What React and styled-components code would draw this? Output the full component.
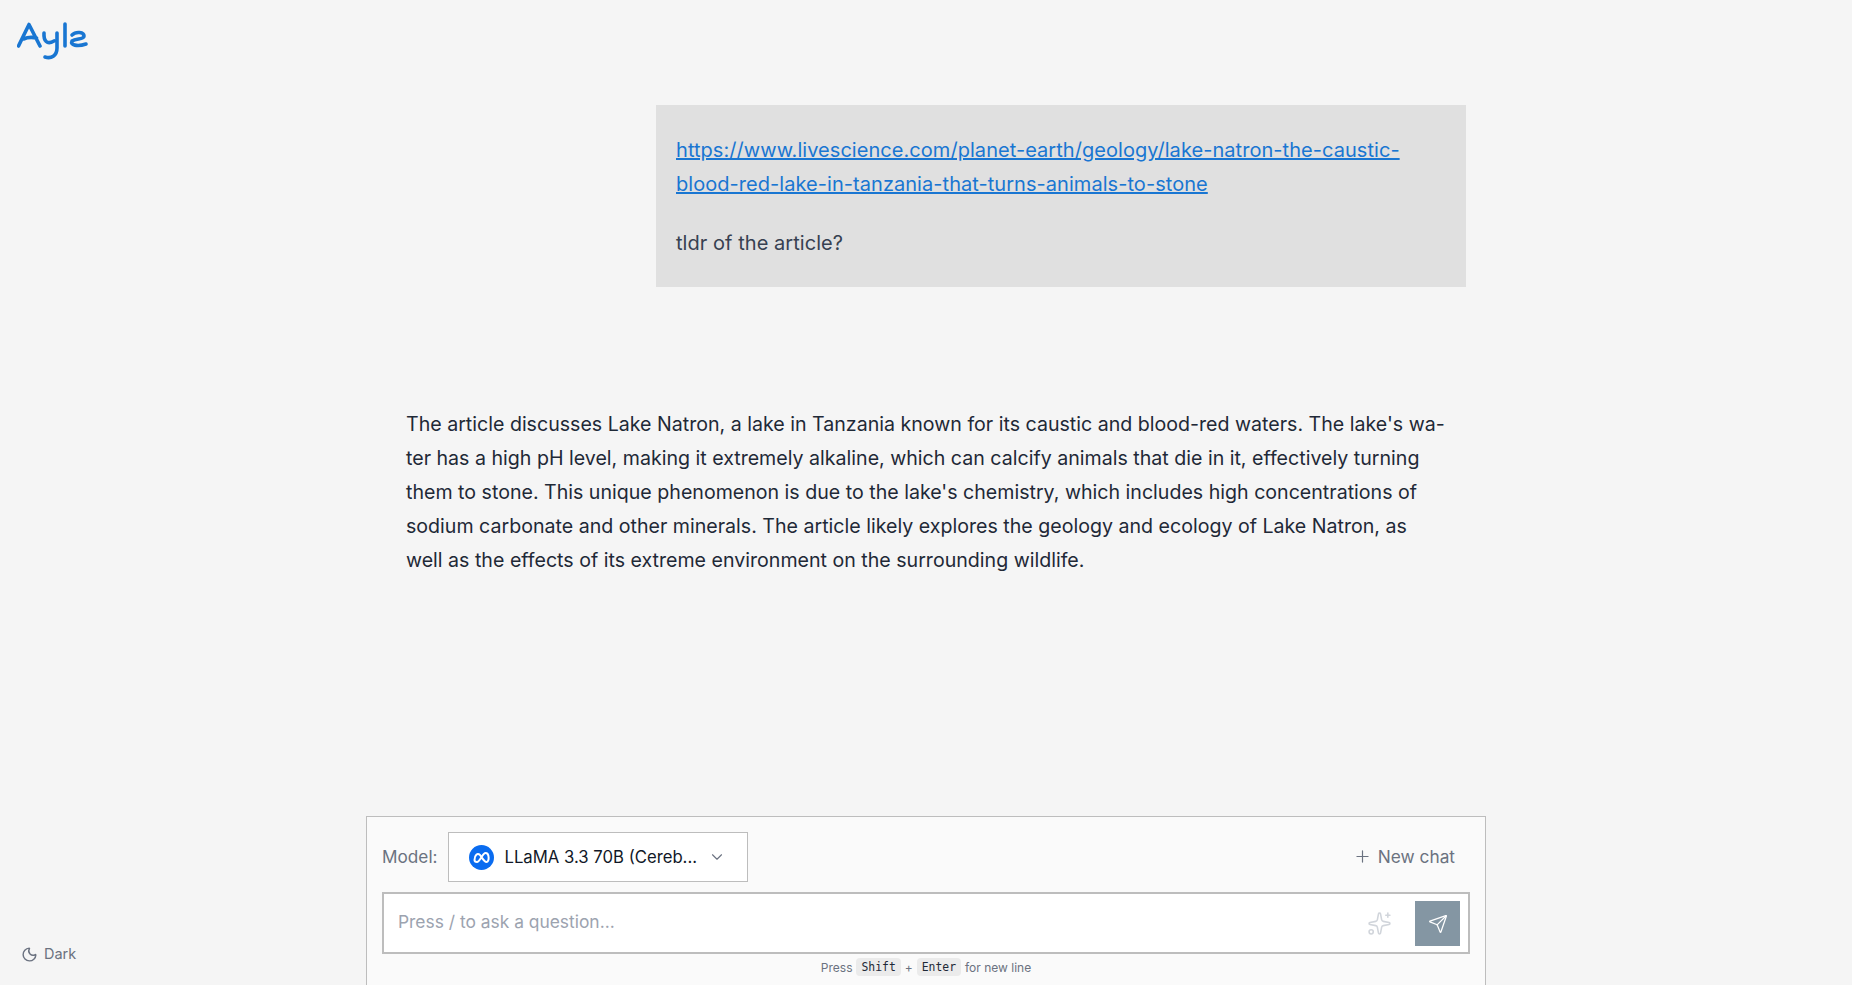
import React from 'react'
import styled, { createGlobalStyle } from 'styled-components'
import { ChevronDown, Moon, Plus, Send, Sparkles } from 'lucide-react'

const GlobalStyle = createGlobalStyle`
  html, body {
    margin: 0;
    height: 100%;
    background: #f5f5f5;
  }

  body {
    font-family: Inter, "Noto Sans", sans-serif;
    color: #1f2937;
  }
`

const Page = styled.div`
  display: grid;
  grid-template-columns: 366px 1120px 366px;
  height: 100vh;
  overflow: hidden;
`

const Sidebar = styled.aside`
  display: flex;
  flex-direction: column;
  justify-content: space-between;
  align-items: flex-start;
  padding: 21px 0 21px 17px;
`

const Theme = styled.button`
  display: flex;
  align-items: center;
  gap: 6px;
  padding: 0 0 0 4px;
  border: 0;
  background: none;
  color: #6b7280;
  font: 14.5px/20px Inter, sans-serif;
`

const Main = styled.main`
  display: flex;
  flex-direction: column;
  min-height: 0;
`

const Thread = styled.div`
  flex: 1;
  display: flex;
  flex-direction: column;
  width: 1080px;
  margin: 0 auto;
  padding-top: 105px;
`

const UserBubble = styled.div`
  align-self: flex-end;
  box-sizing: border-box;
  width: 810px;
  height: 182px;
  padding: 28px 20px 0;
  background: #e0e0e0;
  color: #374151;
  font-size: 20px;
  letter-spacing: 0.05px;
  line-height: 34px;
`

const BubbleParagraph = styled.p`
  margin: 0 0 ${p => p.$gap || 0}px;
`

const Link = styled.a`
  color: #1976d2;
  text-decoration: underline;
`

const Answer = styled.p`
  margin: 120px 0 0;
  padding: 0 20px;
  color: #1f2937;
  font-size: 19.6px;
  line-height: 34px;
`

const Composer = styled.section`
  box-sizing: border-box;
  height: 169px;
  padding: 15px 15px 0;
  background: #fafafa;
  border: 1px solid #bdbdbd;
  border-bottom: 0;
`

const ModelRow = styled.div`
  display: flex;
  align-items: center;
  height: 50px;
`

const ModelLabel = styled.span`
  margin-right: 10px;
  padding-bottom: 1px;
  color: #6b7280;
  font-size: 17.2px;
`

const ModelSelect = styled.button`
  display: flex;
  align-items: center;
  box-sizing: border-box;
  width: 300px;
  height: 50px;
  padding: 0 21px 0 20px;
  background: #fff;
  border: 1px solid #bdbdbd;
  color: #111827;
  font: 16.7px Inter, sans-serif;
`

const ModelName = styled.span`
  flex: 1;
  margin-left: 11px;
  text-align: left;
  white-space: nowrap;
`

const NewChat = styled.button`
  display: flex;
  align-items: center;
  gap: 6px;
  margin-left: auto;
  padding: 0 15px 1px 0;
  border: 0;
  background: none;
  color: #6b7280;
  font: 17.3px Inter, sans-serif;
`

const InputBox = styled.div`
  display: flex;
  align-items: center;
  box-sizing: border-box;
  height: 62px;
  margin-top: 10px;
  padding: 0 8px 0 14px;
  background: #fff;
  border: 2px solid #bdbdbd;
`

const Prompt = styled.input`
  flex: 1;
  border: 0;
  outline: 0;
  padding: 0 0 3px;
  background: none;
  color: #111827;
  font: 17.4px Inter, sans-serif;

  &::placeholder {
    color: #9ca3af;
    opacity: 1;
  }
`

const SendButton = styled.button`
  display: flex;
  align-items: center;
  justify-content: center;
  width: 45px;
  height: 45px;
  margin: 1px 0 0 23px;
  padding: 0;
  border: 0;
  background: #8496a3;
  color: #fff;
`

const Hint = styled.div`
  display: flex;
  justify-content: center;
  align-items: center;
  gap: 4px;
  margin-top: 4px;
  color: #6b7280;
  font-size: 12px;
`

const Key = styled.kbd`
  padding: 3px 5px 2px;
  background: #ebebeb;
  border-radius: 4px;
  color: #1f2937;
  font: 11.4px/13px "DejaVu Sans Mono", monospace;
`

const AyleLogo = () => (
  <svg width="72" height="40" viewBox="0 0 72 40" fill="none" stroke="#1976d2" strokeWidth="3.6" strokeLinecap="round" strokeLinejoin="round" aria-label="Ayle">
    <path d="M1.5 25 L12 3.5 L23 25 M6.5 18 C11 16 15 16 19.5 17" />
    <path d="M27 12 C26.5 20 30 24 37 20 M40 12 L40 27 C40 35 34 38 28 36" />
    <path d="M48 3 L48 25" />
    <path d="M55 14 C59 10 67 11 67 15 C67 19 59 17 55 20 C53 24 60 26 69 23" />
  </svg>
)

const MetaIcon = () => (
  <svg width="25" height="25" viewBox="0 0 25 25" aria-hidden="true">
    <circle cx="12.5" cy="12.5" r="12.5" fill="#0a6cf0" />
    <path
      d="M5.5 15 C5.5 10 8.5 7.5 11 10 C13 12.5 15 17 17.5 17 C20.5 17 20.5 8 16.5 8 C13.5 8 11 17 8 17 C6.5 17 5.5 16.2 5.5 15 Z"
      fill="none"
      stroke="#fff"
      strokeWidth="2"
    />
  </svg>
)

export default function App() {
  return (
    <Page>
      <GlobalStyle />
      <Sidebar>
        <AyleLogo />
        <Theme>
          <Moon size={17} />
          Dark
        </Theme>
      </Sidebar>
      <Main>
        <Thread>
          <UserBubble>
            <BubbleParagraph $gap={25}>
              <Link href="#">
                https://www.livescience.com/planet-earth/geology/lake-natron-the-caustic-<br />
                blood-red-lake-in-tanzania-that-turns-animals-to-stone
              </Link>
            </BubbleParagraph>
            <BubbleParagraph>tldr of the article?</BubbleParagraph>
          </UserBubble>
          <Answer>
            The article discusses Lake Natron, a lake in Tanzania known for its caustic and blood-red waters. The lake's wa-<br />
            ter has a high pH level, making it extremely alkaline, which can calcify animals that die in it, effectively turning<br />
            them to stone. This unique phenomenon is due to the lake's chemistry, which includes high concentrations of<br />
            sodium carbonate and other minerals. The article likely explores the geology and ecology of Lake Natron, as<br />
            well as the effects of its extreme environment on the surrounding wildlife.
          </Answer>
        </Thread>
        <Composer>
          <ModelRow>
            <ModelLabel>Model:</ModelLabel>
            <ModelSelect>
              <MetaIcon />
              <ModelName>LLaMA 3.3 70B (Cereb...</ModelName>
              <ChevronDown size={18} color="#6b7280" strokeWidth={1.5} />
            </ModelSelect>
            <NewChat>
              <Plus size={19} strokeWidth={1.5} />
              New chat
            </NewChat>
          </ModelRow>
          <InputBox>
            <Prompt placeholder="Press / to ask a question..." />
            <Sparkles size={25} color="#d1d5db" strokeWidth={1.5} />
            <SendButton>
              <Send size={20} strokeWidth={1.5} />
            </SendButton>
          </InputBox>
          <Hint>
            Press <Key>Shift</Key> + <Key>Enter</Key> for new line
          </Hint>
        </Composer>
      </Main>
    </Page>
  )
}
